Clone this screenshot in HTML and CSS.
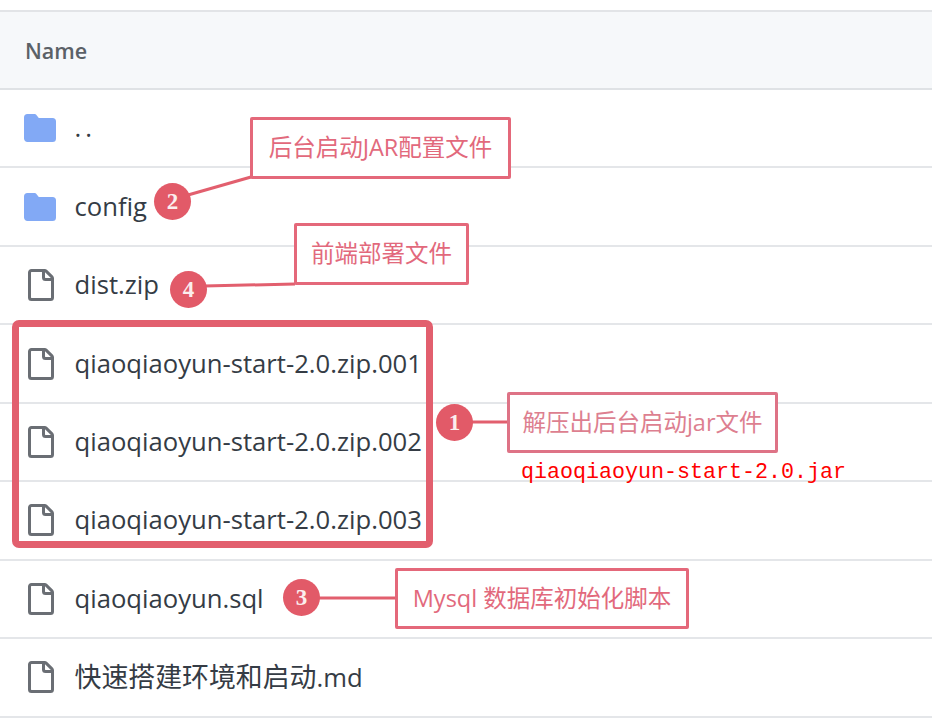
FILE: index.html
```html
<!DOCTYPE html>
<html lang="zh">
<head>
<meta charset="utf-8">
<title>Files</title>
<link rel="stylesheet" href="styles.css">
</head>
<body>
<main class="page">
  <svg width="0" height="0" class="defs" aria-hidden="true">
    <symbol id="folder" viewBox="0 0 16 16"><path d="M1.75 1A1.75 1.75 0 0 0 0 2.75v10.5C0 14.216.784 15 1.75 15h12.5A1.75 1.75 0 0 0 16 13.25v-8.5A1.75 1.75 0 0 0 14.25 3H7.5a.25.25 0 0 1-.2-.1l-.9-1.2C6.07 1.26 5.55 1 5 1H1.75z"/></symbol>
    <symbol id="file" viewBox="0 0 16 16"><path d="M2 1.75C2 .784 2.784 0 3.75 0h6.586c.464 0 .909.184 1.237.513l2.914 2.914c.329.328.513.773.513 1.237v9.586A1.75 1.75 0 0 1 13.25 16h-9.5A1.75 1.75 0 0 1 2 14.25Zm1.75-.25a.25.25 0 0 0-.25.25v12.5c0 .138.112.25.25.25h9.5a.25.25 0 0 0 .25-.25V6h-2.75A1.75 1.75 0 0 1 9 4.25V1.5Zm6.75.062V4.25c0 .138.112.25.25.25h2.688l-.011-.013-2.914-2.914-.013-.011Z"/></symbol>
  </svg>
  <section class="table">
    <header class="head">Name</header>
    <div class="row"><svg class="icon folder"><use href="#folder"/></svg><span class="name dots">..</span></div>
    <div class="row"><svg class="icon folder"><use href="#folder"/></svg><span class="name">config</span></div>
    <div class="row"><svg class="icon file"><use href="#file"/></svg><span class="name">dist.zip</span></div>
    <div class="row"><svg class="icon file"><use href="#file"/></svg><span class="name">qiaoqiaoyun-start-2.0.zip.001</span></div>
    <div class="row"><svg class="icon file"><use href="#file"/></svg><span class="name">qiaoqiaoyun-start-2.0.zip.002</span></div>
    <div class="row"><svg class="icon file"><use href="#file"/></svg><span class="name">qiaoqiaoyun-start-2.0.zip.003</span></div>
    <div class="row"><svg class="icon file"><use href="#file"/></svg><span class="name">qiaoqiaoyun.sql</span></div>
    <div class="row"><svg class="icon file"><use href="#file"/></svg><span class="name"><span class="cjk">快速搭建环境和启动</span>.md</span></div>
  </section>

  <svg class="leaders" width="932" height="718" aria-hidden="true">
    <line x1="188" y1="195" x2="251" y2="177"/>
    <line x1="204" y1="286" x2="295" y2="284"/>
    <line x1="470" y1="422" x2="507" y2="422"/>
    <line x1="318" y1="598" x2="395" y2="598"/>
  </svg>
  <div class="group"></div>
  <div class="note note-jar-config">后台启动JAR配置文件</div>
  <div class="note note-front">前端部署文件</div>
  <div class="note note-unzip">解压出后台启动jar文件</div>
  <div class="note note-sql">Mysql 数据库初始化脚本</div>
  <div class="jar">qiaoqiaoyun-start-2.0.jar</div>
  <div class="dot dot-2">2</div>
  <div class="dot dot-4">4</div>
  <div class="dot dot-1">1</div>
  <div class="dot dot-3">3</div>
</main>
</body>
</html>
```
FILE: styles.css
```css
* { box-sizing: border-box; }
html, body { margin: 0; padding: 0; background: #fff; }
.page {
  position: relative;
  width: 932px;
  height: 718px;
  overflow: hidden;
  padding-top: 10px;
  font-family: "Open Sans", "Noto Sans CJK SC", sans-serif;
}
.defs { position: absolute; }
.table { display: flex; flex-direction: column; border-top: 2px solid #e2e4e7; }
.head {
  height: 78px;
  display: flex;
  align-items: center;
  padding-left: 25px;
  background: #f6f8fa;
  border-bottom: 2px solid #dfe2e5;
  color: #5b6167;
  font-size: 21.5px;
  font-weight: 600;
}
.row {
  height: 78.45px;
  display: flex;
  align-items: center;
  gap: 18.5px;
  padding-left: 24px;
  border-bottom: 2px solid #e4e6e9;
}
.icon { width: 32px; height: 32px; flex: none; }
.folder { fill: #82a9f5; }
.file { fill: #6a6e74; }
.name { color: #353c45; font-size: 25.65px; line-height: 32px; white-space: nowrap; }
.dots { letter-spacing: 4px; }
.cjk { font-size: 26.9px; }

.leaders { position: absolute; left: 0; top: 0; }
.leaders line { stroke: #e25f6e; stroke-width: 3; }
.group {
  position: absolute;
  left: 12px;
  top: 320px;
  width: 421px;
  height: 228px;
  border: 7px solid #e25f6e;
  border-radius: 7px;
}
.note {
  position: absolute;
  display: flex;
  align-items: center;
  justify-content: center;
  padding-bottom: 5px;
  background: #fff;
  border: 3px solid #e4687a;
  border-radius: 2px;
  color: #e2697c;
  font-size: 23.5px;
  white-space: nowrap;
}
.note-jar-config { left: 250px; top: 117px; width: 261px; height: 62px; }
.note-front { left: 294px; top: 223px; width: 175px; height: 62px; }
.note-unzip { left: 507px; top: 392px; width: 271px; height: 61px; padding-bottom: 3px; color: #dd7f90; border-color: #de7386; }
.note-sql { left: 395px; top: 568px; width: 294px; height: 61px; padding-bottom: 3px; }
.jar {
  position: absolute;
  left: 521px;
  top: 460px;
  color: #f00;
  font-family: "Liberation Mono", monospace;
  font-size: 21.67px;
  line-height: 26px;
  white-space: nowrap;
}
.dot {
  position: absolute;
  width: 37px;
  height: 37px;
  border-radius: 50%;
  background: #e25a68;
  color: #fbeeee;
  display: flex;
  align-items: center;
  justify-content: center;
  font-family: "Liberation Serif", serif;
  font-size: 23px;
  font-weight: 700;
}
.dot-2 { left: 154px; top: 183px; }
.dot-4 { left: 170px; top: 271px; }
.dot-1 { left: 436px; top: 404px; }
.dot-3 { left: 283px; top: 579px; }
```
